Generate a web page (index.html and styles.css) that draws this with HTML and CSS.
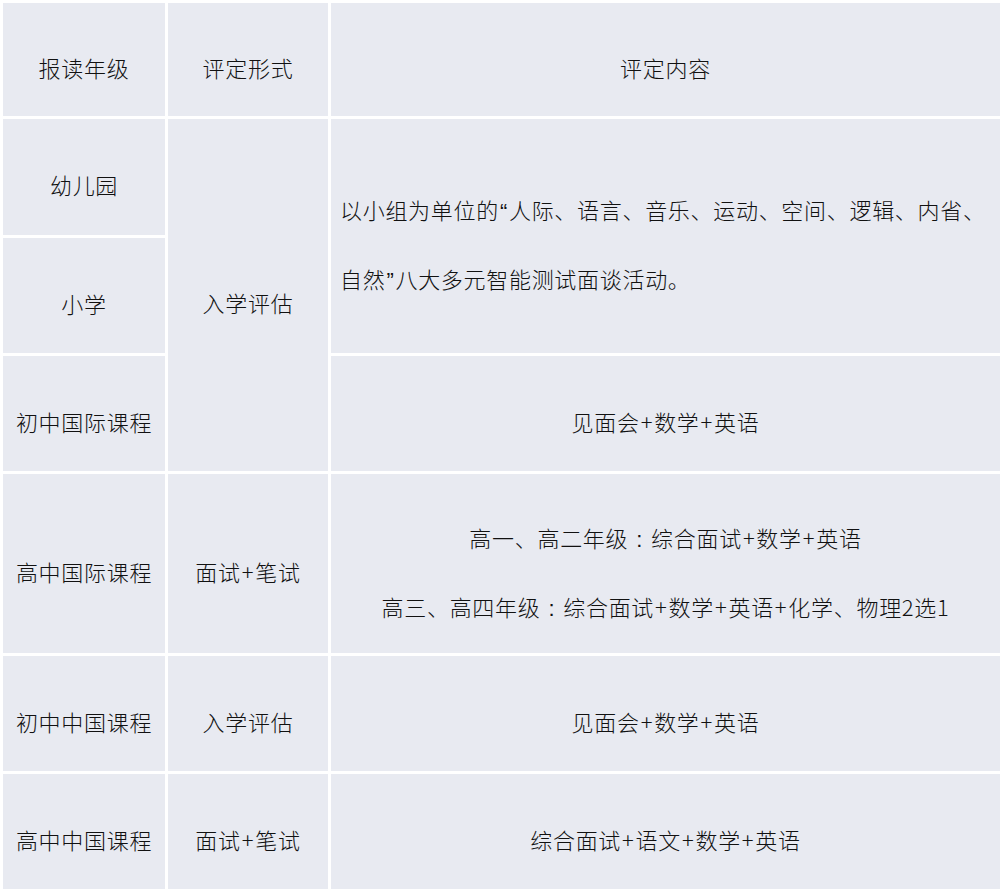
FILE: index.html
```html
<!DOCTYPE html>
<html lang="zh-CN">
<head>
<meta charset="utf-8">
<title>评定</title>
<link rel="stylesheet" href="styles.css">
</head>
<body>
<table class="grid">
  <colgroup>
    <col class="c-grade">
    <col class="c-form">
    <col class="c-content">
  </colgroup>
  <thead>
    <tr class="row-head">
      <th>报读年级</th>
      <th>评定形式</th>
      <th>评定内容</th>
    </tr>
  </thead>
  <tbody>
    <tr class="row-a">
      <td>幼儿园</td>
      <td rowspan="3">入学评估</td>
      <td rowspan="2" class="left tall">以小组为单位的<span class="q">“</span>人际、语言、音乐、运动、空间、逻辑、内省、<br>自然<span class="q">”</span>八大多元智能测试面谈活动。</td>
    </tr>
    <tr class="row-b">
      <td>小学</td>
    </tr>
    <tr class="row-b">
      <td>初中国际课程</td>
      <td>见面会<span class="plus">+</span>数学<span class="plus">+</span>英语</td>
    </tr>
    <tr class="row-big">
      <td>高中国际课程</td>
      <td>面试<span class="plus">+</span>笔试</td>
      <td class="tall">高一、高二年级<span class="colon">:</span>综合面试<span class="plus">+</span>数学<span class="plus">+</span>英语<br>高三、高四年级<span class="colon">:</span>综合面试<span class="plus">+</span>数学<span class="plus">+</span>英语<span class="plus">+</span>化学、物理2选1</td>
    </tr>
    <tr class="row-b">
      <td>初中中国课程</td>
      <td>入学评估</td>
      <td>见面会<span class="plus">+</span>数学<span class="plus">+</span>英语</td>
    </tr>
    <tr class="row-b">
      <td>高中中国课程</td>
      <td>面试<span class="plus">+</span>笔试</td>
      <td>综合面试<span class="plus">+</span>语文<span class="plus">+</span>数学<span class="plus">+</span>英语</td>
    </tr>
  </tbody>
</table>
</body>
</html>
```

FILE: styles.css
```css
html, body {
  margin: 0;
  padding: 0;
  background: #ffffff;
}

body {
  font-family: "Microsoft YaHei", "Noto Sans CJK SC", "Noto Sans", sans-serif;
  color: #111111;
  font-size: 22px;
}

.grid {
  border-collapse: separate;
  border-spacing: 3px;
  table-layout: fixed;
  width: 1003px;
}

.c-grade { width: 162px; }
.c-form { width: 160px; }
.c-content { width: 669px; }

.grid th,
.grid td {
  background: #e8eaf1;
  padding: 14px 0 0 0;
  text-align: center;
  vertical-align: middle;
  font-weight: 300;
  line-height: 30px;
  letter-spacing: 0.7px;
  white-space: nowrap;
}

.row-head { height: 113px; }
.row-a { height: 116px; }
.row-b { height: 115px; }
.row-big { height: 179px; }

.grid td.tall {
  line-height: 67px;
  padding-top: 18px;
}

.grid td.left {
  text-align: left;
  padding-left: 9px;
}

.plus {
  display: inline-block;
  margin: 0 1px;
}

.q {
  font-family: "Liberation Sans", sans-serif;
  margin: 0 1px;
}

.colon {
  display: inline-block;
  font-family: "Liberation Sans", sans-serif;
  margin: 0 8px;
}
```
